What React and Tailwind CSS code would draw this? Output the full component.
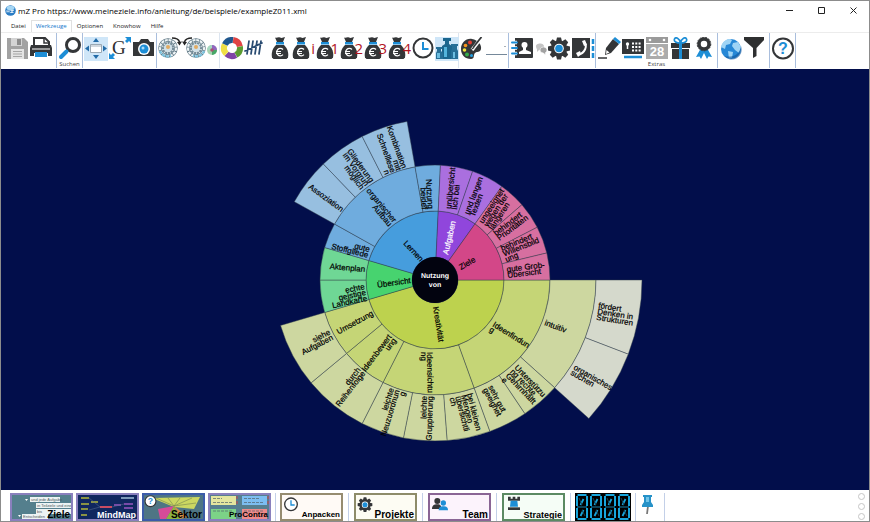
import React from "react";

const DARK = "#343638";
const BLUE = "#1d8ed6";

/* ---------- sunburst data: [ring, from, to, fill] in degrees, clockwise from east ---------- */
const SEGMENTS = [
  [1, 0, 163.6, "#bdd24e"],
  [1, 163.6, 196.4, "#47d36f"],
  [1, 196.4, 272.7, "#469ddd"],
  [1, 272.7, 305.5, "#9046dc"],
  [1, 305.5, 360, "#d34788"],
  [2, 0, 70.1, "#c5d576"],
  [2, 70.1, 116.9, "#c5d576"],
  [2, 116.9, 140.3, "#c5d576"],
  [2, 140.3, 163.6, "#c5d576"],
  [2, 163.6, 180, "#6fd795"],
  [2, 180, 196.4, "#6fd795"],
  [2, 196.4, 209.1, "#6facde"],
  [2, 209.1, 260, "#6facde"],
  [2, 260, 272.7, "#6facde"],
  [2, 272.7, 289.1, "#aa6fdf"],
  [2, 289.1, 305.5, "#aa6fdf"],
  [2, 305.5, 319.1, "#d76fa0"],
  [2, 319.1, 332.7, "#d76fa0"],
  [2, 332.7, 346.4, "#d76fa0"],
  [2, 346.4, 360, "#d76fa0"],
  [3, 0, 42, "#cdd7a0"],
  [3, 42, 56.1, "#cdd7a0"],
  [3, 56.1, 70.1, "#cdd7a0"],
  [3, 70.1, 85.7, "#cdd7a0"],
  [3, 85.7, 101.3, "#cdd7a0"],
  [3, 101.3, 116.9, "#cdd7a0"],
  [3, 116.9, 140.3, "#cdd7a0"],
  [3, 140.3, 163.6, "#cdd7a0"],
  [3, 209.1, 226.1, "#97bfe0"],
  [3, 226.1, 243.1, "#97bfe0"],
  [3, 243.1, 260, "#97bfe0"],
  [4, 0, 21, "#d5d9cc"],
  [4, 21, 42, "#d5d9cc"],
];

/* [x, y, rotation, anchor, lines, colour] */
const LABELS = [
  [-94, -68, 36, "end", ["Assoziation"]],
  [-65, -97, 54, "end", ["Gliederung", "im Vorgrun", "möglich"]],
  [-33, -111, 70, "end", ["Kombination", "mit", "Schnelllese", "n"]],
  [-42, -57, 50, "end", ["organischer", "Aufbau"]],
  [-7, -71, 86, "end", ["Nutzung", "beidef"]],
  [-66, -28, 14, "end", ["gute", "Stoffgliede"]],
  [-15, -18, 47, "end", ["Lernen"]],
  [-70, -8, 5, "end", ["Aktenplan"]],
  [-24, 3, -8, "end", ["Übersicht"]],
  [-70, 9, -12, "end", ["echte", "geistige", "Landkarte"]],
  [-61, 35, -29, "end", ["Umsetzung"]],
  [-104, 54, -27, "end", ["siehe", "Aufgaben"]],
  [-43, 57, -53, "end", ["Ideenbewert", "ung"]],
  [-74, 90, -52, "end", ["durch", "Reihenfolge"]],
  [-41, 109, -73, "end", ["leichte", "Neuzuordnun", "g"]],
  [-8, 116, -88, "end", ["leichte", "Gruppierung"]],
  [-8, 72, 89, "start", ["Ideensichtu", "ng"]],
  [-2, 27, 81, "start", ["Kreativität"]],
  [57, 46, 32, "start", ["Ideenfindun", "g"]],
  [109, 45, 20, "start", ["intuitiv"]],
  [163, 28, 9, "start", ["fördert", "Denken in", "Strukturen"]],
  [138, 89, 30, "start", ["organisches", "suchen"]],
  [79, 88, 46, "start", ["Unterstützu", "ng rechte", "Gehirnhälft", "e"]],
  [53, 107, 62, "start", ["sehr gut", "geeignet"]],
  [32, 114, 76, "start", ["bei kleinen", "Mengen", "übersichtli", "ch"]],
  [26, -10, -30, "start", ["Ziele"]],
  [13, -25, -77, "start", ["Aufgaben"], "#ffffff"],
  [16, -71, -84, "start", ["unübersicht", "lich bei"]],
  [34, -65, -69, "start", ["und langen", "Texten"]],
  [48, -56, -57, "start", ["ungeeignet", "wegen der", "längeren"]],
  [61, -44, -37, "start", ["behindert", "Prioritäten"]],
  [67, -29, -22, "start", ["behindert", "Willensbild", "ung"]],
  [72, -8, -7, "start", ["gute Grob-", "Übersicht"]],
];

function wedge(r0, r1, a0, a1) {
  const p = (r, a) => {
    const t = (a * Math.PI) / 180;
    return `${(r * Math.cos(t)).toFixed(2)} ${(r * Math.sin(t)).toFixed(2)}`;
  };
  const big = a1 - a0 > 180 ? 1 : 0;
  return `M${p(r0, a0)}L${p(r1, a0)}A${r1} ${r1} 0 ${big} 1 ${p(r1, a1)}L${p(r0, a1)}A${r0} ${r0} 0 ${big} 0 ${p(r0, a0)}Z`;
}

function Sunburst() {
  return (
    <svg viewBox="-208 -208 416 416" textRendering="geometricPrecision" className="h-[416px] w-[416px] shrink-0 font-['Liberation_Sans',Arial,sans-serif] text-[8px]" role="img" aria-label="Nutzung von">
      {SEGMENTS.map(([ring, a0, a1, fill], i) => (
        <path key={i} d={wedge(ring * 46 - 23, ring * 46 + 23, a0, a1)} fill={fill} stroke="#34404a" strokeOpacity="0.75" strokeWidth="0.6" />
      ))}
      <circle r="23" fill="#02030f" />
      {LABELS.map(([x, y, rot, anchor, lines, fill = "#000000"], i) => (
        <g key={i} transform={`translate(${x} ${y}) rotate(${rot})`}>
          {lines.map((line, n) => (
            <text key={n} y={n * 6} textAnchor={anchor} fill={fill} stroke={fill} strokeWidth="0.2">{line}</text>
          ))}
        </g>
      ))}
      <g fill="#fff" textAnchor="middle" className="text-[7px] font-bold">
        <text y="-2">Nutzung</text>
        <text y="7">von</text>
      </g>
    </svg>
  );
}

/* ---------- toolbar icons ---------- */
function Icon({ children, w = 24, className = "h-6 w-6" }) {
  return <svg viewBox={`0 0 ${w} 24`} className={`${className} shrink-0`} aria-hidden="true">{children}</svg>;
}

const SaveIcon = () => (
  <Icon>
    <path d="M2 1h17l4 4v17H2z" fill="#a2a2a2" />
    <path d="M6 1h11v8H6z" fill="#d4d4d4" /><path d="M12 2h4v6h-4z" fill="#8c8c8c" />
    <path d="M6 12h13v10H6z" fill="#e4e4e4" /><path d="M8 14.500h9M8 17h9M8 19.500h9" stroke="#a5a5a5" />
  </Icon>
);
const PrintIcon = () => (
  <Icon>
    <path d="M5 9V1h11l4 4v4" fill="#fff" stroke={DARK} strokeWidth="2" /><path d="M15 1v5h5" fill="none" stroke={DARK} strokeWidth="1.500" />
    <path d="M2 8h20l1 3v8h-4v-3H5v3H1v-8z" fill={DARK} /><path d="M3 12h18" stroke="#fff" />
    <path d="M6 15h12v5H6z" fill={BLUE} />
  </Icon>
);
const SearchIcon = () => (
  <Icon>
    <circle cx="15" cy="8" r="6.500" fill="#fff" stroke={DARK} strokeWidth="3" />
    <path d="M10.500 12.500 8 15" stroke={DARK} strokeWidth="3" /><path d="M8.500 14.500 3 20" stroke={BLUE} strokeWidth="4" strokeLinecap="round" />
  </Icon>
);
const FitIcon = () => (
  <Icon>
    <path d="M6.500 7.500h11v8h-11z" fill="#fff" stroke="#9aa8b3" /><path d="M7 8h10v2H7z" fill="#d1d8de" />
    <path d="m12 1 3 4H9zM12 22l3-4H9zM1 11.500l4-3v6zM23 11.500l-4-3v6z" fill="#236ca8" />
  </Icon>
);
const FontIcon = () => (
  <Icon>
    <text x="4" y="17" className="font-['Liberation_Serif',serif] text-[19px]" fill="#303030">G</text>
    <path d="M17 0h6v6l-2-2-2 2-2-2 2-2zM1 22v-6l2 2 2-2 2 2-2 2 2 2z" fill={BLUE} />
  </Icon>
);
const CameraIcon = () => (
  <Icon>
    <path d="M2 5h5l2-3h7l2 3h4v14H1V5z" fill={DARK} />
    <circle cx="12" cy="12" r="6" fill="#fff" /><circle cx="12" cy="12" r="4.500" fill={BLUE} /><circle cx="11" cy="11" r="1.500" fill="#a9dcf8" />
  </Icon>
);
const WheelIcon = ({ back }) => (
  <Icon>
    <g transform={back ? "translate(24 0) scale(-1 1)" : undefined}>
      <circle cx="10" cy="11" r="8" fill="none" stroke="#5d7683" strokeWidth="3.500" />
      <circle cx="10" cy="11" r="8" fill="none" stroke="#eef4f6" strokeWidth="2.200" strokeDasharray="3 0.800" />
      <path d="M2 14A8 8 0 0 0 13 18.500" fill="none" stroke="#7fc4df" strokeWidth="2.500" strokeDasharray="3 1" />
      <circle cx="10" cy="11" r="5" fill="none" stroke="#758d99" strokeWidth="2.500" strokeDasharray="2.200 0.600" />
      <circle cx="10" cy="11" r="4" fill="#cfe0e8" /><circle cx="10" cy="10" r="2" fill="#e2ab62" />
      <path d="M14 1c5 0 7 2 7.500 4" fill="none" stroke="#252525" strokeWidth="1.500" /><path d="m19 5 5-.5-2.500 4z" fill="#252525" />
    </g>
  </Icon>
);
const MiniWheelIcon = () => (
  <Icon w={12} className="h-6 w-3">
    <circle cx="6" cy="13" r="5" fill="#a8d3b1" /><path d="M6 13V8a5 5 0 0 1 5 5z" fill="#9266c0" />
    <path d="M6 13h5a5 5 0 0 1-5 5z" fill="#47a767" /><path d="M6 13H1a5 5 0 0 1 5-5z" fill="#a5d8c0" /><circle cx="6" cy="13" r="1.800" fill="#a65470" />
  </Icon>
);
const RING = ["#e04444", "#5b9b31", "#8044a6", "#f0df45", "#20578d"];
const RingIcon = () => (
  <Icon>
    <g transform="translate(12 11)">
      {[-82, -10, 62, 134, 206].map((a, i) => <path key={a} d={wedge(5, 11, a, a + 71)} fill={RING[i]} />)}
    </g>
  </Icon>
);
const TallyIcon = () => (
  <Icon><path d="M5 4 3 17M9 4 7 17M13 4l-2 13M17 4l-2 13M1 14 18 6" fill="none" stroke="#284a70" strokeWidth="1.700" strokeLinecap="round" /></Icon>
);
const BagIcon = ({ mark }) => (
  <Icon>
    <path d="M5 .5c2 1 3-1 5 0s3 0 5-.5L13 5H7z" fill={DARK} /><path d="M6 5h8v2.500H6z" fill={BLUE} />
    <path d="M6 8h8c3 3 5 7 4 12.500L16.500 22h-13L2 20.500C1 15 3 11 6 8z" fill={DARK} />
    <path d="M13 12.500a3.700 3.700 0 1 0 0 5.200M6 14.500h5M6 16.500h5" fill="none" stroke="#fff" strokeWidth="1.200" />
    {mark && <text x="24" y="17" textAnchor="end" fill="#b3151f" className="font-['Open_Sans',sans-serif] text-[15px]">{mark}</text>}
  </Icon>
);
const ClockIcon = ({ className }) => (
  <Icon className={className}>
    <circle cx="12" cy="11" r="9.500" fill="#fff" stroke={DARK} strokeWidth="2" /><path d="M12 5v7h5.500" fill="none" stroke={BLUE} strokeWidth="2" />
  </Icon>
);
const WeightsIcon = () => (
  <Icon>
    <path d="M8 1h8v3h-2v3l3 2v13H7V9l3-2V4H8z" fill="#1b668e" /><path d="M9 10h3v10H9z" fill="#54b4dc" />
    <path d="M1 10h6v2H6v2l2 2v6H1v-6l1-2v-2H1zM16 7h7v2h-1v3l1 2v8h-7v-8l1-2V9h-1z" fill="#276f97" />
    <path d="M2 16h3v5H2zM18 15h2v6h-2z" fill="#6cbde0" />
  </Icon>
);
const PaletteIcon = () => (
  <Icon>
    <path d="M12 2C6 1 1 6 1 12s4 10 10 10c4 0 2-4 4-6s5 0 6-4-3-9-9-10z" fill={DARK} />
    <circle cx="10" cy="5.500" r="2" fill="#e83b2f" /><circle cx="5.500" cy="8.500" r="1.800" fill="#f7941d" /><circle cx="4.500" cy="13" r="1.800" fill="#f3e43c" />
    <circle cx="7" cy="17.500" r="2" fill="#36ad4a" /><circle cx="11.500" cy="18.500" r="1.500" fill="#23a0e2" />
    <path d="M22 0 12 13" stroke="#fff" strokeWidth="3.500" /><path d="m21.500 0-8 10" stroke={DARK} strokeWidth="1.800" /><path d="m13.500 9.500-4 4.500 5-3z" fill={DARK} />
  </Icon>
);
const LineIcon = () => (
  <Icon><path d="M2 17.500h21" stroke="#75889a" /><path d="M20.500 9.500h1" stroke="#526270" /></Icon>
);
const BookIcon = () => (
  <Icon>
    <path d="M4 1h17q1 0 1 1v18q0 1-1 1H4z" fill={DARK} /><path d="M1 5.500h5M1 11h5M1 16.500h5" stroke="#fff" strokeWidth="3.600" /><path d="M1 5.500h5M1 11h5M1 16.500h5" stroke={BLUE} strokeWidth="2" strokeLinecap="round" />
    <circle cx="13.500" cy="8" r="3" fill="#fff" /><path d="M12 10h3v3l5 2v2H8v-2l4-2z" fill="#fff" />
  </Icon>
);
const ChatIcon = () => (
  <Icon w={12} className="h-6 w-3">
    <path d="M1 10a4 3 0 0 1 8-1 4 3 0 0 1-5 4l-2 2v-2.500z" fill="#c4c4c4" /><path d="M5 13a3.500 3 0 1 1 5.500 2.500V18l-2-2A3.500 3 0 0 1 5 13z" fill="#a2a2a2" stroke="#fff" strokeWidth="0.600" />
  </Icon>
);
const GearIcon = ({ className }) => (
  <Icon className={className}>
    {[0, 45, 90, 135].map((a) => <path key={a} d="M10 .5h4l1 4v14l-1 4h-4l-1-4v-14z" fill={DARK} transform={`rotate(${a} 12 11.500)`} />)}
    <circle cx="12" cy="11.500" r="8" fill={DARK} /><circle cx="12" cy="11.500" r="4.800" fill="#fff" /><circle cx="12" cy="11.500" r="3.800" fill={BLUE} />
  </Icon>
);
const PhoneIcon = () => (
  <Icon>
    <path d="M1 1h18v20H1z" fill={DARK} /><path d="M13 5c4 4 1 11-6 13" fill="none" stroke="#fff" strokeWidth="2" />
    <path d="m11 4 3-1 2 5-3 1zM5 16l4-2 1 3-3 3z" fill="#fff" /><path d="M22 2v5M22 9v5M22 16v5" stroke={BLUE} strokeWidth="2.500" />
  </Icon>
);
const PencilIcon = () => (
  <Icon>
    <path d="m8 18 1-7 7-9 6 5-8 9z" fill={DARK} /><path d="m16 2 2-2 6 5-2 2z" fill={BLUE} /><path d="m9.500 13 3 2.500L9 17z" fill="#fff" /><path d="M1 21h9" stroke={DARK} strokeWidth="1.500" />
  </Icon>
);
const SafeIcon = () => (
  <Icon>
    <path d="M1 2h22v15H1z" fill={DARK} /><circle cx="6.500" cy="7" r="1.700" fill="#fff" /><path d="M6.500 7v5" stroke="#fff" strokeWidth="1.500" />
    <path d="M11 6.500h9M11 10h9M11 13.500h9" stroke="#fff" strokeWidth="1.800" strokeDasharray="2 1.300" /><path d="M3 20h18" stroke={BLUE} strokeWidth="2.500" />
  </Icon>
);
const CalendarIcon = () => (
  <Icon>
    <path d="M1 0h22v6H1z" fill="#9a9a9a" /><path d="M1 7h22v15H1z" fill="#ababab" /><circle cx="5" cy="3" r="1.300" fill="#fff" /><circle cx="19" cy="3" r="1.300" fill="#fff" />
    <text x="12" y="19" textAnchor="middle" fill="#fff" className="font-['Liberation_Sans',sans-serif] text-[13px] font-bold">28</text>
  </Icon>
);
const GiftIcon = () => (
  <Icon>
    <path d="M2 6h19v5H2zM3 12h17v10H3z" fill={DARK} /><path d="M10 6h3v16h-3z" fill={BLUE} />
    <path d="M11.500 6C7.500 6 4.500 4.500 5.500 2s5-1 6 4c1-5 5-6.500 6-4s-2 4-6 4z" fill="#fff" stroke={BLUE} strokeWidth="1.700" />
  </Icon>
);
const RibbonIcon = () => (
  <Icon>
    <path d="m8 11-5 9 3.500-.5L8 22l3-6 3 6 1.500-2.500L19 20l-5-9z" fill={BLUE} />
    <circle cx="11" cy="7" r="5" fill="#fff" stroke={DARK} strokeWidth="3.500" /><circle cx="11" cy="7" r="6.800" fill="none" stroke={DARK} strokeDasharray="2 1" />
  </Icon>
);
const GlobeIcon = ({ className }) => (
  <Icon className={className}>
    <circle cx="12" cy="12" r="10" fill="#2788d6" /><path d="M3 7c3-5 8-6 10-4l-2 4-4 1-1 4-4-2zM14 6l5-1 3 5-2 6-4-3-3-4zM9 14l5 1-1 6-3 1z" fill="#9fd4f5" /><path d="M5 19A10 10 0 0 0 22 9c-1 9-9 12-17 10z" fill="#0d559c" opacity=".6" />
  </Icon>
);
const FunnelIcon = () => <Icon><path d="M1 0h20v3l-7.500 8v8L10 21V11L1 3z" fill="#2e2f30" /></Icon>;
const HelpIcon = ({ className }) => (
  <Icon className={className}>
    <circle cx="12" cy="11.500" r="10" fill="#fff" stroke={DARK} strokeWidth="2" />
    <text x="12" y="17" textAnchor="middle" fill={BLUE} className="font-['Liberation_Sans',sans-serif] text-[16px] font-bold">?</text>
  </Icon>
);

function Tool({ label, width = "w-6", active, children }) {
  return (
    <button type="button" aria-label={label} className={`h-6 shrink-0 ${width} ${active ? "bg-[#cfe6f8]" : ""}`}>{children}</button>
  );
}

function Group({ width, caption, light, pad = "pl-px", children }) {
  return (
    <div className={`relative flex shrink-0 items-start border-r pt-1 ${light ? "border-[#dce5f0]" : "border-[#a9bedd]"} ${pad} ${width}`}>
      {children}
      {caption && <span className="absolute inset-x-0 bottom-0 text-center text-[6px] leading-[8px] text-[#444]">{caption}</span>}
    </div>
  );
}

function Toolbar() {
  return (
    <div className="flex h-[37px] shrink-0 border-t border-[#ececec] bg-white pb-px">
      <Group width="w-14" pad="pl-1">
        <Tool label="Speichern"><SaveIcon /></Tool>
        <Tool label="Drucken"><PrintIcon /></Tool>
      </Group>
      <Group width="w-[26px]" caption="Suchen"><Tool label="Suche"><SearchIcon /></Tool></Group>
      <Group width="w-[74px]">
        <Tool label="Einpassen" active><FitIcon /></Tool>
        <Tool label="Schriftgröße"><FontIcon /></Tool>
        <Tool label="Foto"><CameraIcon /></Tool>
      </Group>
      <Group width="w-[63px]" light>
        <Tool label="Vorwärts drehen"><WheelIcon /></Tool>
        <Tool label="Rückwärts drehen"><WheelIcon back /></Tool>
        <Tool label="Sektor" width="w-3"><MiniWheelIcon /></Tool>
      </Group>
      <Group width="w-[239px]" light pad="pl-0">
        <Tool label="Farben"><RingIcon /></Tool>
        <Tool label="Zählen"><TallyIcon /></Tool>
        <div className="flex pl-0.5">
          <Tool label="Wert" width="w-[21px]"><BagIcon /></Tool>
          <Tool label="Wert i"><BagIcon mark="i" /></Tool>
          <Tool label="Wert 1"><BagIcon mark="1" /></Tool>
          <Tool label="Wert 2"><BagIcon mark="2" /></Tool>
          <Tool label="Wert 3"><BagIcon mark="3" /></Tool>
          <Tool label="Wert 4"><BagIcon mark="4" /></Tool>
        </div>
        <Tool label="Zeit"><ClockIcon /></Tool>
        <Tool label="Gewichte" active><WeightsIcon /></Tool>
      </Group>
      <Group width="w-[50px]"><Tool label="Farbpalette"><PaletteIcon /></Tool><Tool label="Linie"><LineIcon /></Tool></Group>
      <Group width="w-[87px]" pad="pl-0.5">
        <Tool label="Kontakte"><BookIcon /></Tool>
        <Tool label="Chat" width="w-3"><ChatIcon /></Tool>
        <Tool label="Einstellungen"><GearIcon /></Tool>
        <Tool label="Telefon"><PhoneIcon /></Tool>
      </Group>
      <Group width="w-[122px]" caption="Extras">
        <Tool label="Notiz"><PencilIcon /></Tool>
        <Tool label="Tresor"><SafeIcon /></Tool>
        <Tool label="Kalender"><CalendarIcon /></Tool>
        <Tool label="Geschenk"><GiftIcon /></Tool>
        <Tool label="Auszeichnung"><RibbonIcon /></Tool>
      </Group>
      <Group width="w-[52px]"><Tool label="Web"><GlobeIcon /></Tool><Tool label="Filter"><FunnelIcon /></Tool></Group>
      <Group width="w-[26px]"><Tool label="Hilfe anzeigen"><HelpIcon /></Tool></Group>
    </div>
  );
}

/* ---------- bottom bar ---------- */
function Card({ label, className, text = "text-[10px] text-black", children }) {
  return (
    <button type="button" className={`relative h-7 w-[63px] shrink-0 overflow-hidden border-2 ${className}`}>
      {children}
      <span className={`absolute right-px -bottom-px font-['Liberation_Sans',Arial,sans-serif] leading-[10px] font-bold ${text}`}>{label}</span>
    </button>
  );
}

const Thumb = ({ children }) => <svg viewBox="0 0 59 24" preserveAspectRatio="none" className="absolute inset-0 h-full w-full font-['Liberation_Sans',sans-serif]" aria-hidden="true">{children}</svg>;

const ZieleThumb = () => (
  <Thumb>
    <rect width="59" height="24" fill="#547f8d" />
    <path d="M18 2h30v5H18zM24 8h35v5H24zM24 14h35v5H24zM10 19h26v5H10z" fill="#edf3f4" />
    <path d="M13 4h3l-1.500 2zM6 20h3l-1.500 2z" fill="#fff" />
    <g className="text-[4px]" fill="#4b5a60"><text x="19" y="6">und jede Aufgabe</text><text x="25" y="12">in Teilziele und eine</text><text x="25" y="18">bis</text><text x="11" y="23">Entscheiden</text></g>
  </Thumb>
);
const MindMapThumb = () => (
  <Thumb>
    <rect width="59" height="24" fill="#10275f" />
    <path d="M3 3h8M3 9h8M3 14h7M13 7h7M3 20h6" stroke="#b3b83c" strokeWidth="1.500" /><path d="M22 12h12" stroke="#c94c63" strokeWidth="2" />
    <path d="M36 10h7M46 9h9M46 13h9" stroke="#774aa8" strokeWidth="2" /><path d="M43 3h13" stroke="#a1bfd6" strokeWidth="1.500" /><path d="M11 3 22 12 11 15M34 12l12-3" stroke="#5c7392" strokeWidth=".5" fill="none" />
  </Thumb>
);
const SektorThumb = () => (
  <Thumb>
    <rect width="59" height="24" fill="#4e7584" />
    <path d="M8 3 56 2 50 14 30 12z" fill="#cbd761" /><path d="m14 14 16-3-8 13h-6z" fill="#d64b98" /><path d="M30 11 22 24h14z" fill="#8fb43f" /><path d="m30 11 14 11-8 2z" fill="#d08c4a" />
    <path d="M30 11 12 3M30 11 24 3M30 11 36 3M30 11 48 3M30 11l22-3" stroke="#748451" strokeWidth=".6" />
  </Thumb>
);
const ProContraThumb = () => (
  <Thumb>
    <rect width="59" height="24" fill="#577f90" />
    <path d="M1 1h25v9H1z" fill="#e5e69f" /><path d="M32 1h25v9H32z" fill="#7cbdf1" /><path d="M1 14h25v10H1z" fill="#7cd387" /><path d="M32 14h25v10H32z" fill="#ef8a8a" />
    <path d="M3 3.500h9M3 7.500h19M34 3.500h16M34 7.500h20M3 16h20M34 16h20" stroke="#51616b" strokeWidth=".7" strokeDasharray="3 1" /><path d="M27 1v3M27 6v3M58 1v3M58 6v3" stroke="#c84747" />
  </Thumb>
);
const TeamIcon = () => (
  <Icon className="h-4 w-4">
    <circle cx="8" cy="6" r="4.500" fill={DARK} /><path d="M0 18c0-5 3-7 8-7s6 3 6 7z" fill={DARK} /><circle cx="17" cy="9" r="4" fill={BLUE} /><path d="M10 20c0-5 3-6 7-6s7 1 7 6z" fill={BLUE} />
  </Icon>
);
const RookIcon = () => (
  <Icon className="h-4 w-4">
    <path d="M3 1h4v3h3V1h4v3h3V1h4v6H3z" fill={DARK} /><path d="M7 7h10l1 9H6z" fill={BLUE} /><path d="M3 17h18v4H3z" fill={DARK} />
  </Icon>
);
const Rule = ({ space }) => <div className={`w-px shrink-0 self-stretch bg-[#c3d0e8] ${space}`} />;

function Digit() {
  return (
    <svg viewBox="0 0 14 28" className="h-7 w-3.5 bg-black" aria-hidden="true">
      <path d="M2.500 2h9M2.500 14h9M2.500 26h9M2 3v10M12 3v10M2 15v10M12 15v10" stroke="#17a5dc" strokeWidth="2" fill="none" />
      <path d="M3 14h8" stroke="#0b4055" strokeWidth="2" />
      <path d="m8.500 6-3 6M8.500 17l-3 6" stroke="#17a5dc" strokeWidth="1.800" /><path d="m4 5 3 7M7 17l3 6" stroke="#144052" />
    </svg>
  );
}

function BottomBar() {
  return (
    <footer className="flex h-[31px] shrink-0 items-start overflow-hidden bg-white pt-[3px]">
      <div className="flex shrink-0 gap-[3px] pl-[9px]">
        <Card label="Ziele" className="border-[#8a80bd]"><ZieleThumb /></Card>
        <Card label="MindMap" className="border-[#8a80bd]" text="text-[9px] text-white"><MindMapThumb /></Card>
        <Card label="Sektor" className="border-[#3b5ca9]"><SektorThumb /><HelpIcon className="absolute top-0 left-0 h-[13px] w-[13px]" /></Card>
        <Card label="ProContra" className="border-[#8a80bd]" text="text-[8px] text-black"><ProContraThumb /></Card>
      </div>
      <Rule space="ml-1 mr-1" />
      <Card label="Anpacken" className="border-[#968c70] bg-[#fffaf6]" text="text-[8px] text-black"><ClockIcon className="absolute top-0.5 left-px h-4 w-4" /></Card>
      <Rule space="mx-[5px]" />
      <Card label="Projekte" className="border-[#8e8c6a] bg-[#fdfcf3]"><GearIcon className="absolute top-0.5 left-px h-4 w-4" /></Card>
      <Rule space="mx-[5px]" />
      <Card label="Team" className="border-[#8a6595] bg-[#fcf3fc]"><span className="absolute top-0.5 left-0.5"><TeamIcon /></span></Card>
      <Rule space="mx-[5px]" />
      <Card label="Strategie" className="border-[#5c8a63] bg-[#f5fdf6]" text="text-[9px] text-black"><span className="absolute top-px left-0.5"><RookIcon /></span></Card>
      <Rule space="ml-[5px] mr-1" />
      <div className="flex shrink-0"><Digit /><Digit /><Digit /><Digit /></div>
      <Rule space="mx-1" />
      <button type="button" aria-label="Anheften" className="w-6 shrink-0">
        <svg viewBox="0 0 24 24" className="h-6 w-6" aria-hidden="true"><path d="m8 13-1 8" stroke="#777" strokeWidth="1.800" /><path d="M3 2h9v2h-1v5l2 3v2H2v-2l2-3V4H3z" fill="#2792c8" /><path d="M6 4h3v5H6z" fill="#72c4e8" /></svg>
      </button>
      <Rule space="" />
      <div className="mr-1 ml-auto flex flex-col gap-[3px]">
        {["a", "b", "c"].map((id) => <span key={id} className="h-[7px] w-[7px] rounded-full border border-[#c6c6c6]" />)}
      </div>
    </footer>
  );
}

const MENU = ["Datei", "Werkzeuge", "Optionen", "Knowhow", "Hilfe"];

export default function App() {
  return (
    <div className="flex h-screen flex-col overflow-hidden border border-[#8c8c8c] bg-white font-['Open_Sans','Noto_Sans',sans-serif]">
      <header className="flex h-[19px] shrink-0 items-center pl-1 text-black">
        <svg viewBox="0 0 11 11" className="mr-0.5 h-[11px] w-[11px] shrink-0" aria-hidden="true">
          <circle cx="5.500" cy="5.500" r="5.300" fill="#2a7cc4" /><ellipse cx="5.500" cy="3" rx="4" ry="2.200" fill="#a5d6f4" />
          <path d="M2 7.500V5.500l1 1 1-1v2M5.500 5.500h3l-3 2h3" fill="none" stroke="#fff" strokeWidth=".8" />
        </svg>
        <h1 className="text-[8px] leading-4 whitespace-nowrap">mZ Pro https://www.meineziele.info/anleitung/de/beispiele/exampleZ011.xml</h1>
        <div className="mr-3 ml-auto flex gap-[25px]">
          <button type="button" aria-label="Minimieren"><svg viewBox="0 0 7 7" className="h-[7px] w-[7px]"><path d="M0 3.500h7" stroke="#222" /></svg></button>
          <button type="button" aria-label="Maximieren"><svg viewBox="0 0 7 7" className="h-[7px] w-[7px]"><path d="M.5.5h6v6h-6z" fill="none" stroke="#222" /></svg></button>
          <button type="button" aria-label="Schließen"><svg viewBox="0 0 7 7" className="h-[7px] w-[7px]"><path d="m.5.5 6 6m0-6-6 6" stroke="#222" /></svg></button>
        </div>
      </header>
      <nav className="flex h-3 shrink-0 pl-[5px] text-[6px] leading-3 text-[#222]">
        {MENU.map((item) => (
          <button key={item} type="button" className={item === "Werkzeuge" ? "border-x border-t border-[#e0e0e0] px-1 leading-[11px] text-[#1177cc]" : "px-[5px] leading-3"}>{item}</button>
        ))}
      </nav>
      <Toolbar />
      <main className="flex min-h-0 flex-1 items-center justify-center overflow-hidden bg-[#020e4b] pt-px">
        <Sunburst />
      </main>
      <BottomBar />
    </div>
  );
}
